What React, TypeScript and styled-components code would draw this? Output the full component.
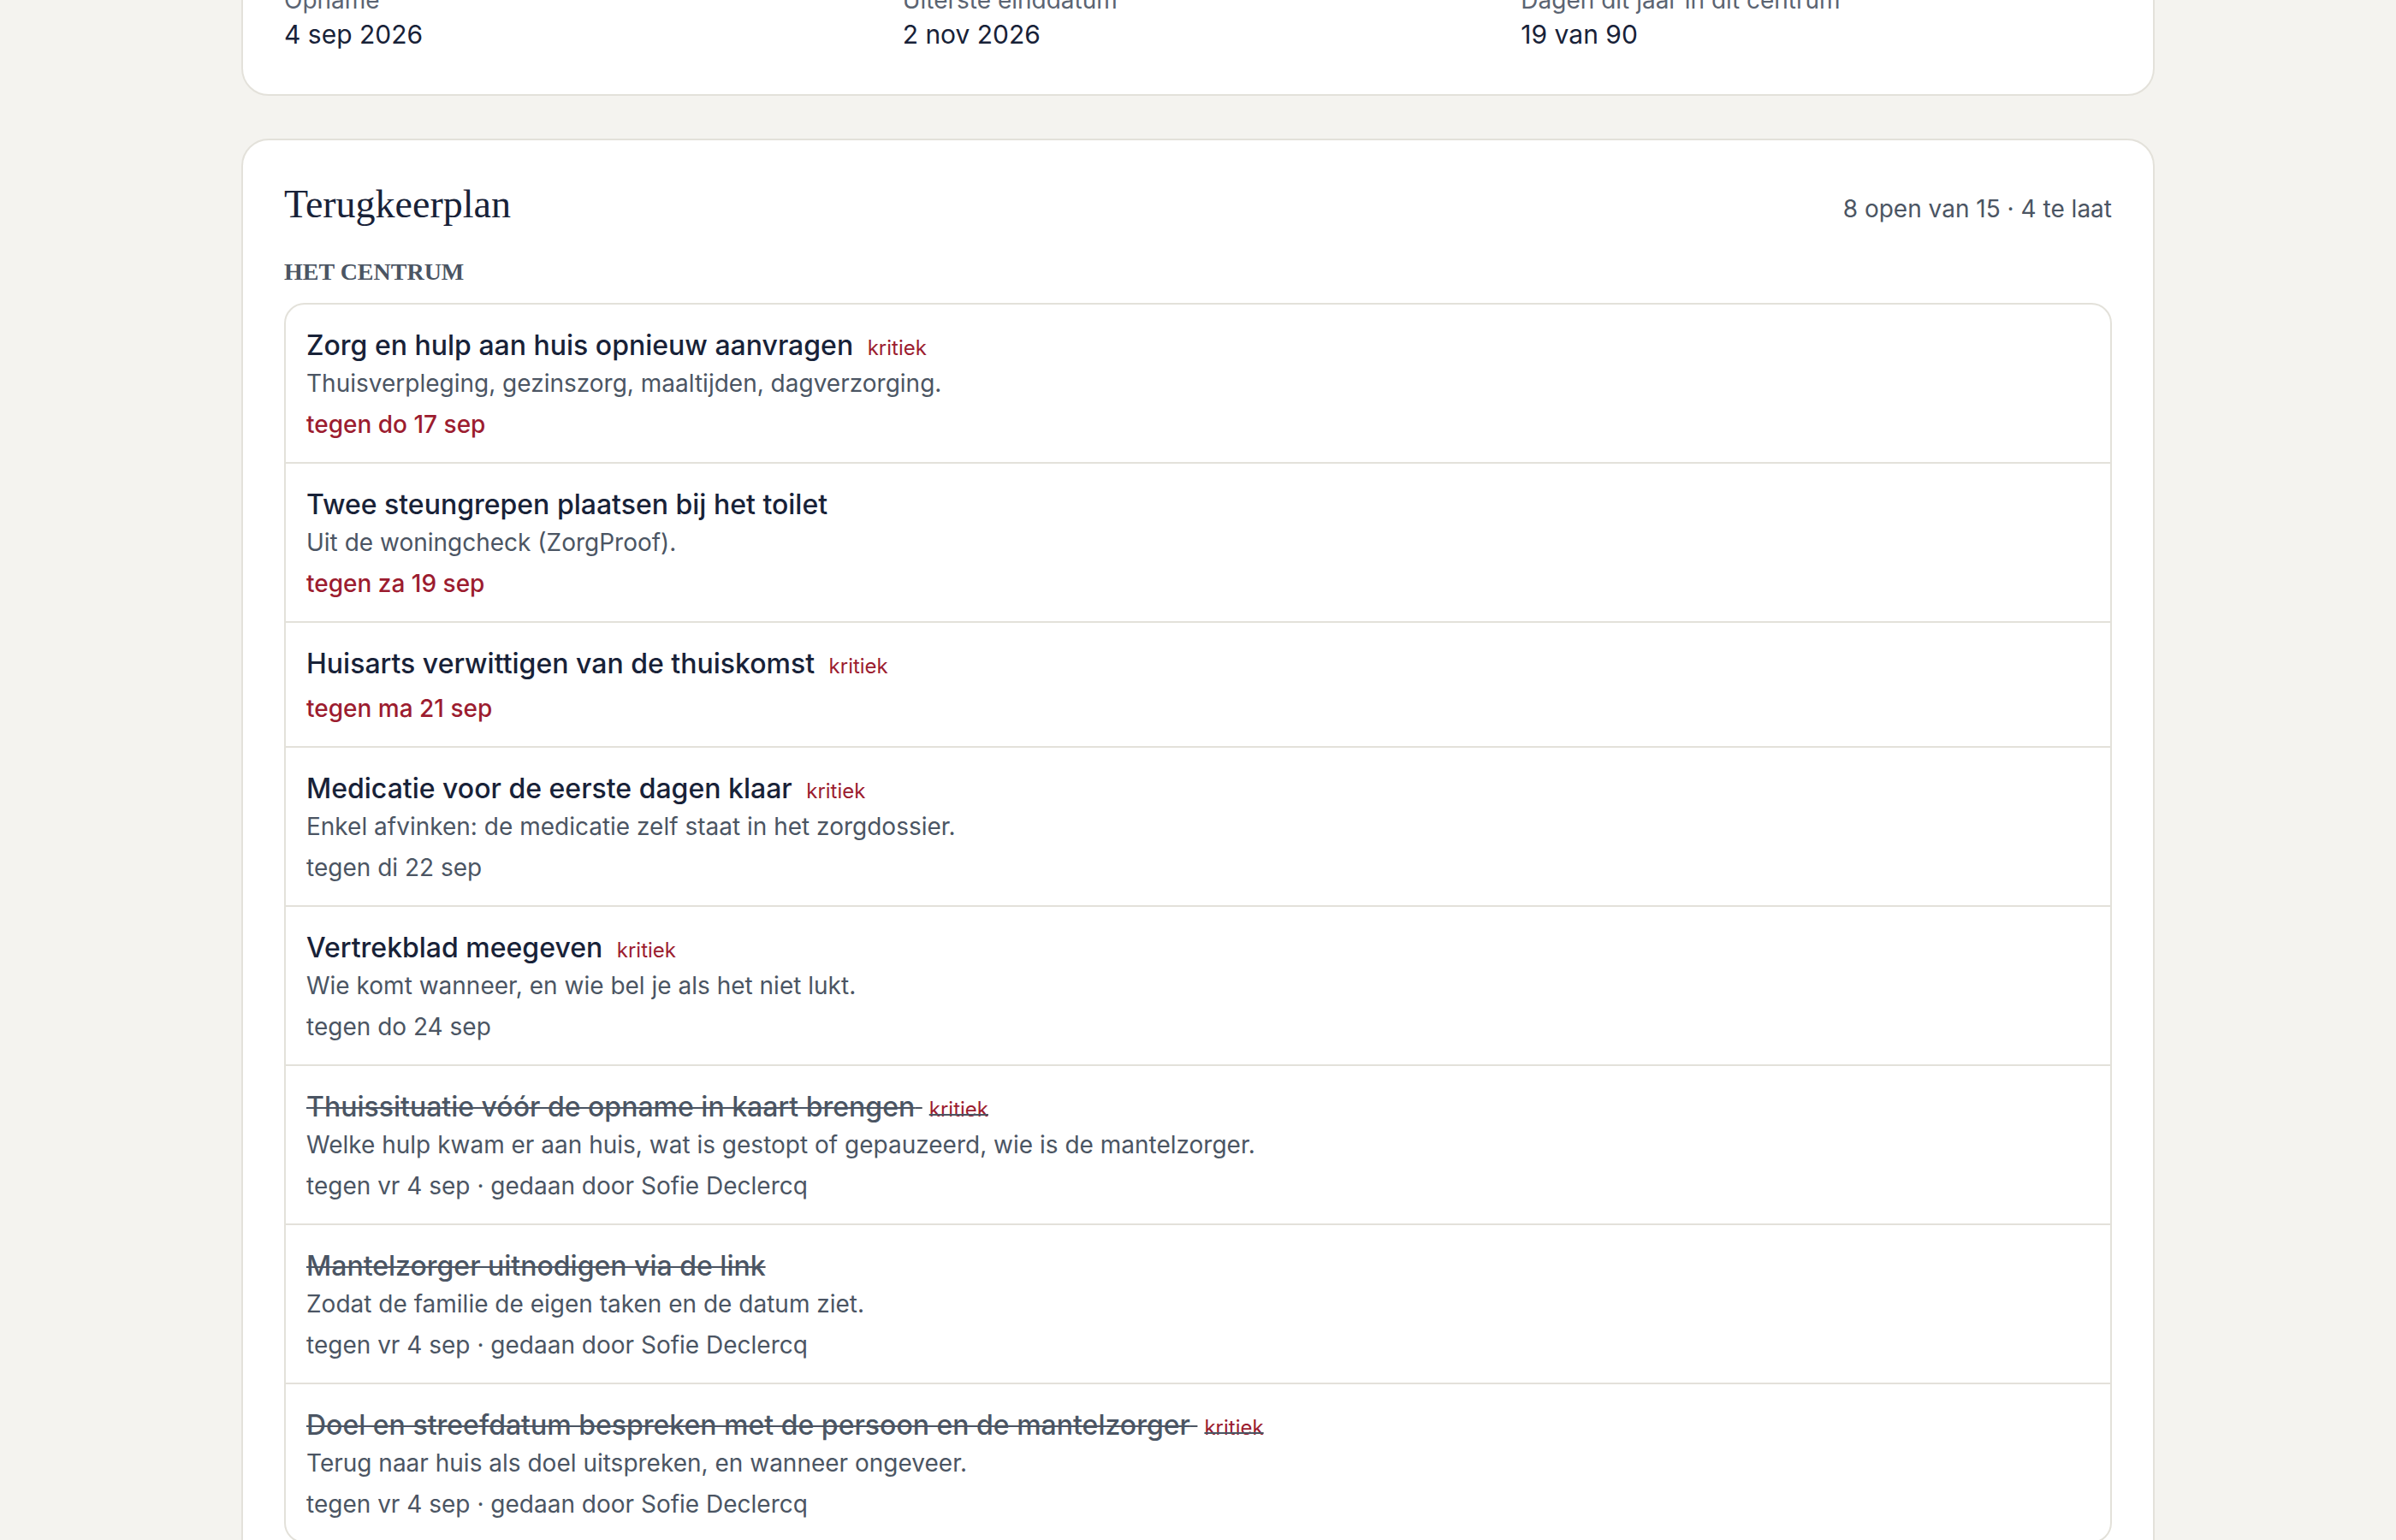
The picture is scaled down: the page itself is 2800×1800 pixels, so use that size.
import React from "react";
import styled, { createGlobalStyle } from "styled-components";

const GlobalStyle = createGlobalStyle`
  html, body {
    margin: 0;
    padding: 0;
    background: #f4f3ef;
  }
  body {
    font-family: Inter, "Noto Sans", "Liberation Sans", sans-serif;
    color: #182238;
    -webkit-font-smoothing: antialiased;
  }
`;

const Page = styled.main`
  width: 2236px;
  margin: -68px auto 0;
  display: flex;
  flex-direction: column;
  gap: 50px;
`;

const Card = styled.section`
  background: #ffffff;
  border: 2px solid #e3e1da;
  border-radius: 32px;
  padding: 48px;
`;

const StatGrid = styled.div`
  display: grid;
  grid-template-columns: repeat(3, 1fr);
  gap: 32px;
`;

const Stat = styled.div`
  display: flex;
  flex-direction: column;
`;

const StatLabel = styled.div`
  font-size: 28px;
  line-height: 36px;
  color: #5b6472;
`;

const StatValue = styled.div`
  font-size: 30px;
  line-height: 44px;
  color: #182238;
`;

const CardHeader = styled.header`
  display: flex;
  justify-content: space-between;
  align-items: baseline;
  margin-bottom: 36px;
`;

const CardTitle = styled.h2`
  margin: 0;
  font-family: "Liberation Serif", "DejaVu Serif", serif;
  font-weight: 400;
  font-size: 46px;
  line-height: 54px;
  color: #182238;
`;

const Summary = styled.div`
  font-size: 28px;
  color: #4b5563;
`;

const SectionLabel = styled.h3`
  margin: 0 0 20px;
  font-family: "Liberation Serif", "DejaVu Serif", serif;
  font-weight: 700;
  font-size: 28px;
  line-height: 32px;
  color: #4b5563;
  text-transform: uppercase;
`;

const TaskList = styled.ul`
  list-style: none;
  margin: 0;
  padding: 0;
  border: 2px solid #e3e1da;
  border-radius: 24px;
  overflow: hidden;
`;

const TaskRow = styled.li`
  padding: 24px 24px;
  border-top: 2px solid #e3e1da;

  &:first-child {
    border-top: none;
  }
`;

const TaskTitle = styled.div<{ $done: boolean }>`
  font-size: 32px;
  line-height: 48px;
  font-weight: 500;
  color: ${(p) => (p.$done ? "#4b5563" : "#182238")};
  text-decoration: ${(p) => (p.$done ? "line-through" : "none")};
  text-decoration-thickness: 2px;
`;

const Critical = styled.span`
  margin-left: 8px;
  font-size: 24px;
  line-height: 1;
  font-weight: 400;
  color: #9c1c2f;
`;

const TaskNote = styled.div`
  font-size: 28px;
  line-height: 40px;
  color: #4b5563;
`;

const TaskDue = styled.div<{ $late: boolean }>`
  margin-top: 8px;
  font-size: 28px;
  line-height: 40px;
  font-weight: ${(p) => (p.$late ? 500 : 400)};
  color: ${(p) => (p.$late ? "#9c1c2f" : "#4b5563")};
`;

type Task = {
  title: string;
  note?: string;
  due: string;
  critical?: boolean;
  late?: boolean;
  doneBy?: string;
};

const stats = [
  { label: "Opname", value: "4 sep 2026" },
  { label: "Uiterste einddatum", value: "2 nov 2026" },
  { label: "Dagen dit jaar in dit centrum", value: "19 van 90" },
];

const tasks: Task[] = [
  {
    title: "Zorg en hulp aan huis opnieuw aanvragen",
    note: "Thuisverpleging, gezinszorg, maaltijden, dagverzorging.",
    due: "do 17 sep",
    critical: true,
    late: true,
  },
  {
    title: "Twee steungrepen plaatsen bij het toilet",
    note: "Uit de woningcheck (ZorgProof).",
    due: "za 19 sep",
    late: true,
  },
  {
    title: "Huisarts verwittigen van de thuiskomst",
    due: "ma 21 sep",
    critical: true,
    late: true,
  },
  {
    title: "Medicatie voor de eerste dagen klaar",
    note: "Enkel afvinken: de medicatie zelf staat in het zorgdossier.",
    due: "di 22 sep",
    critical: true,
  },
  {
    title: "Vertrekblad meegeven",
    note: "Wie komt wanneer, en wie bel je als het niet lukt.",
    due: "do 24 sep",
    critical: true,
  },
  {
    title: "Thuissituatie vóór de opname in kaart brengen",
    note: "Welke hulp kwam er aan huis, wat is gestopt of gepauzeerd, wie is de mantelzorger.",
    due: "vr 4 sep",
    critical: true,
    doneBy: "Sofie Declercq",
  },
  {
    title: "Mantelzorger uitnodigen via de link",
    note: "Zodat de familie de eigen taken en de datum ziet.",
    due: "vr 4 sep",
    doneBy: "Sofie Declercq",
  },
  {
    title: "Doel en streefdatum bespreken met de persoon en de mantelzorger",
    note: "Terug naar huis als doel uitspreken, en wanneer ongeveer.",
    due: "vr 4 sep",
    critical: true,
    doneBy: "Sofie Declercq",
  },
];

export default function App() {
  return (
    <>
      <GlobalStyle />
      <Page>
        <Card>
          <StatGrid>
            {stats.map((s) => (
              <Stat key={s.label}>
                <StatLabel>{s.label}</StatLabel>
                <StatValue>{s.value}</StatValue>
              </Stat>
            ))}
          </StatGrid>
        </Card>

        <Card>
          <CardHeader>
            <CardTitle>Terugkeerplan</CardTitle>
            <Summary>8 open van 15 · 4 te laat</Summary>
          </CardHeader>
          <SectionLabel>Het centrum</SectionLabel>
          <TaskList>
            {tasks.map((t) => {
              const done = Boolean(t.doneBy);
              return (
                <TaskRow key={t.title}>
                  <TaskTitle $done={done}>
                    {t.title}
                    {t.critical && (
                      <>
                        {" "}
                        <Critical>kritiek</Critical>
                      </>
                    )}
                  </TaskTitle>
                  {t.note && <TaskNote>{t.note}</TaskNote>}
                  <TaskDue $late={Boolean(t.late)}>
                    tegen {t.due}
                    {done && ` · gedaan door ${t.doneBy}`}
                  </TaskDue>
                </TaskRow>
              );
            })}
          </TaskList>
        </Card>
      </Page>
    </>
  );
}
